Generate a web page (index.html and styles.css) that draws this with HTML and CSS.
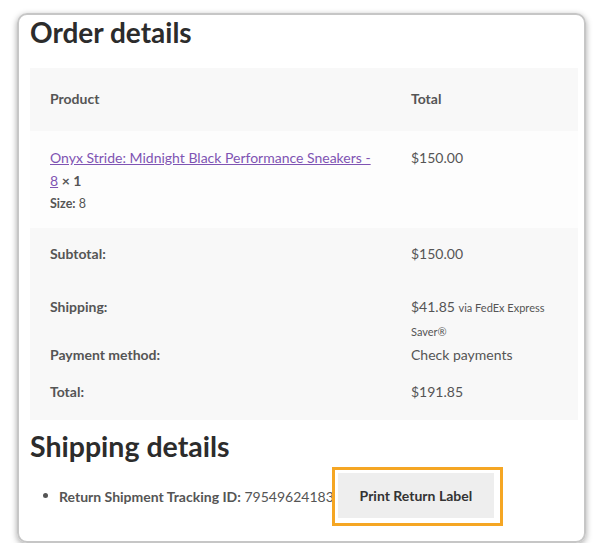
FILE: index.html
```html
<!DOCTYPE html>
<html>
<head>
<meta charset="utf-8">
<link rel="stylesheet" href="styles.css">
</head>
<body>
<div class="card">
  <h2 class="title">Order details</h2>
  <div class="table">
    <div class="row head">
      <div class="c1">Product</div>
      <div class="c2">Total</div>
    </div>
    <div class="row item">
      <div class="c1">
        <div class="pname"><a class="link" href="#">Onyx Stride: Midnight Black Performance Sneakers - 8</a> <strong class="qty">× 1</strong></div>
        <div class="meta"><strong>Size:</strong> 8</div>
      </div>
      <div class="c2">$150.00</div>
    </div>
    <div class="foot">
      <div class="row r-sub">
        <div class="c1 lbl">Subtotal:</div>
        <div class="c2">$150.00</div>
      </div>
      <div class="row r-ship">
        <div class="c1 lbl">Shipping:</div>
        <div class="c2 ship">$41.85 <small class="via">via FedEx Express Saver®</small></div>
      </div>
      <div class="row r-pay">
        <div class="c1 lbl">Payment method:</div>
        <div class="c2">Check payments</div>
      </div>
      <div class="row r-total">
        <div class="c1 lbl">Total:</div>
        <div class="c2">$191.85</div>
      </div>
    </div>
  </div>
  <h2 class="title title2">Shipping details</h2>
  <ul class="list">
    <li class="li">
      <span class="line">
        <span class="track"><strong>Return Shipment Tracking ID:</strong> 795496241837</span>
        <span class="hl"><button class="btn">Print Return Label</button></span>
      </span>
    </li>
  </ul>
</div>
</body>
</html>
```

FILE: styles.css
```css
html, body {
  margin: 0;
  padding: 0;
  background: #ffffff;
}
body {
  font-family: Lato, "Open Sans", sans-serif;
  color: #555555;
  font-size: 14px;
  line-height: 24px;
}
.card {
  box-sizing: border-box;
  margin: 13px 0 0 17px;
  width: 569px;
  height: 530px;
  border: 2px solid #c6c6c6;
  border-radius: 10px;
  box-shadow: 0 2px 6px rgba(0,0,0,0.35);
  padding: 0 6px 0 11px;
  overflow: hidden;
}
.title {
  margin: 0;
  font-size: 28px;
  line-height: 34px;
  font-weight: 700;
  color: #2c2c2c;
  height: 53px;
}
.title2 {
  margin-top: 9px;
  height: 38px;
  font-size: 28.5px;
}
.table {
  width: 548px;
}
.row {
  display: grid;
  grid-template-columns: 361px 1fr;
}
.c1, .c2 {
  padding-left: 20px;
}
.c2 { padding-right: 20px; }
.head {
  background: #f8f8f8;
  padding: 19px 0 20px;
  font-weight: 700;
}
.item {
  background: #fdfdfd;
  padding: 15px 0 13px;
}
.item .c1 { padding-right: 14px; }
.pname { line-height: 23px; }
.link {
  color: #7f54b3;
}
.qty { color: #555; }
.meta {
  font-size: 12.5px;
  line-height: 22px;
  margin-top: 1px;
}
.foot {
  background: #f8f8f8;
}
.lbl { font-weight: 700; }
.r-sub { padding: 14px 0 14px; }
.r-ship { padding: 15px 0 0; }
.r-pay { padding: 0; }
.r-total { padding: 13px 0 16px; }
.ship { line-height: 24px; }
.via {
  font-size: 11px;
  line-height: 1;
}
.list {
  margin: 0;
  padding: 0 0 0 29px;
}
.li {
  color: #555;
}
.line {
  display: inline-flex;
  align-items: center;
  vertical-align: middle;
}
.track {
  white-space: nowrap;
}
.hl {
  display: inline-block;
  border: 3px solid #f5a623;
  padding: 3px 6px 5px 3px;
  margin-left: -10px;
  background: #fff;
  position: relative;
}
.btn {
  display: block;
  font-family: inherit;
  font-size: 14px;
  font-weight: 700;
  color: #333;
  background: #eeeeee;
  border: 0;
  padding: 0;
  width: 156px;
  height: 45px;
}
```
